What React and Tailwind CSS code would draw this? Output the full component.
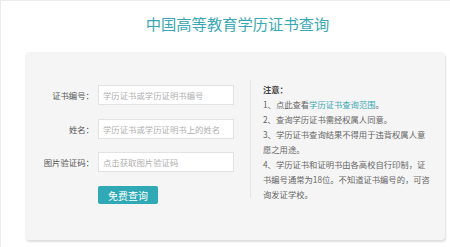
export default function App() {
  const font = { fontFamily: '"Noto Sans CJK SC", "Noto Sans", sans-serif' };
  return (
    <div className="w-[450px] h-[247px] bg-white border-t border-l border-[#ececec] overflow-hidden" style={font}>
      <div className="ml-[25px] w-[419px] pl-[4px] pt-[13px] h-[51px] text-center text-[15.3px] leading-[18px] text-[#3aa8b4]">
        中国高等教育学历证书查询
      </div>
      <div className="ml-[24px] w-[420px] h-[188px] bg-[#f5f5f5] rounded-[4px] shadow-[1px_2px_2px_rgba(0,0,0,0.13)] flex">
        <div className="w-[225px] pt-[33px] flex flex-col">
          <div className="flex items-center h-[20px]">
            <div className="w-[69px] text-right text-[8.4px] text-[#555] whitespace-nowrap">证书编号：</div>
            <div className="ml-[4px] w-[136px] h-[20px] bg-white border border-[#e2e2e2] flex items-center pl-[4px] text-[8.4px] text-[#b0b0b0] whitespace-nowrap">学历证书或学历证明书编号</div>
          </div>
          <div className="flex items-center h-[20px] mt-[14px]">
            <div className="w-[69px] text-right text-[8.4px] text-[#555] whitespace-nowrap">姓名：</div>
            <div className="ml-[4px] w-[136px] h-[20px] bg-white border border-[#e2e2e2] flex items-center pl-[4px] text-[8.4px] text-[#b0b0b0] whitespace-nowrap">学历证书或学历证明书上的姓名</div>
          </div>
          <div className="flex items-center h-[20px] mt-[13px]">
            <div className="w-[69px] text-right text-[8.4px] text-[#555] whitespace-nowrap">图片验证码：</div>
            <div className="ml-[4px] w-[136px] h-[20px] bg-white border border-[#e2e2e2] flex items-center pl-[4px] text-[8.4px] text-[#b0b0b0] whitespace-nowrap">点击获取图片验证码</div>
          </div>
          <div className="mt-[14px] ml-[73px] w-[60px] h-[18px] bg-[#2ea9b5] rounded-[2px] flex items-center justify-center text-white text-[10px]">
            免费查询
          </div>
        </div>
        <div className="mt-[28px] h-[118px] border-l border-[#e6e6e6] pl-[12px] pt-[2px] text-[8.3px] leading-[15px] text-[#666] whitespace-nowrap">
          <div className="text-[#444] font-bold">注意：</div>
          <div>1、点此查看<span className="text-[#3aa8b4]">学历证书查询范围</span>。</div>
          <div>2、查询学历证书需经权属人同意。</div>
          <div>3、学历证书查询结果不得用于违背权属人意</div>
          <div>愿之用途。</div>
          <div>4、学历证书和证明书由各高校自行印制，证</div>
          <div>书编号通常为18位。不知道证书编号的，可咨</div>
          <div>询发证学校。</div>
        </div>
      </div>
    </div>
  );
}
